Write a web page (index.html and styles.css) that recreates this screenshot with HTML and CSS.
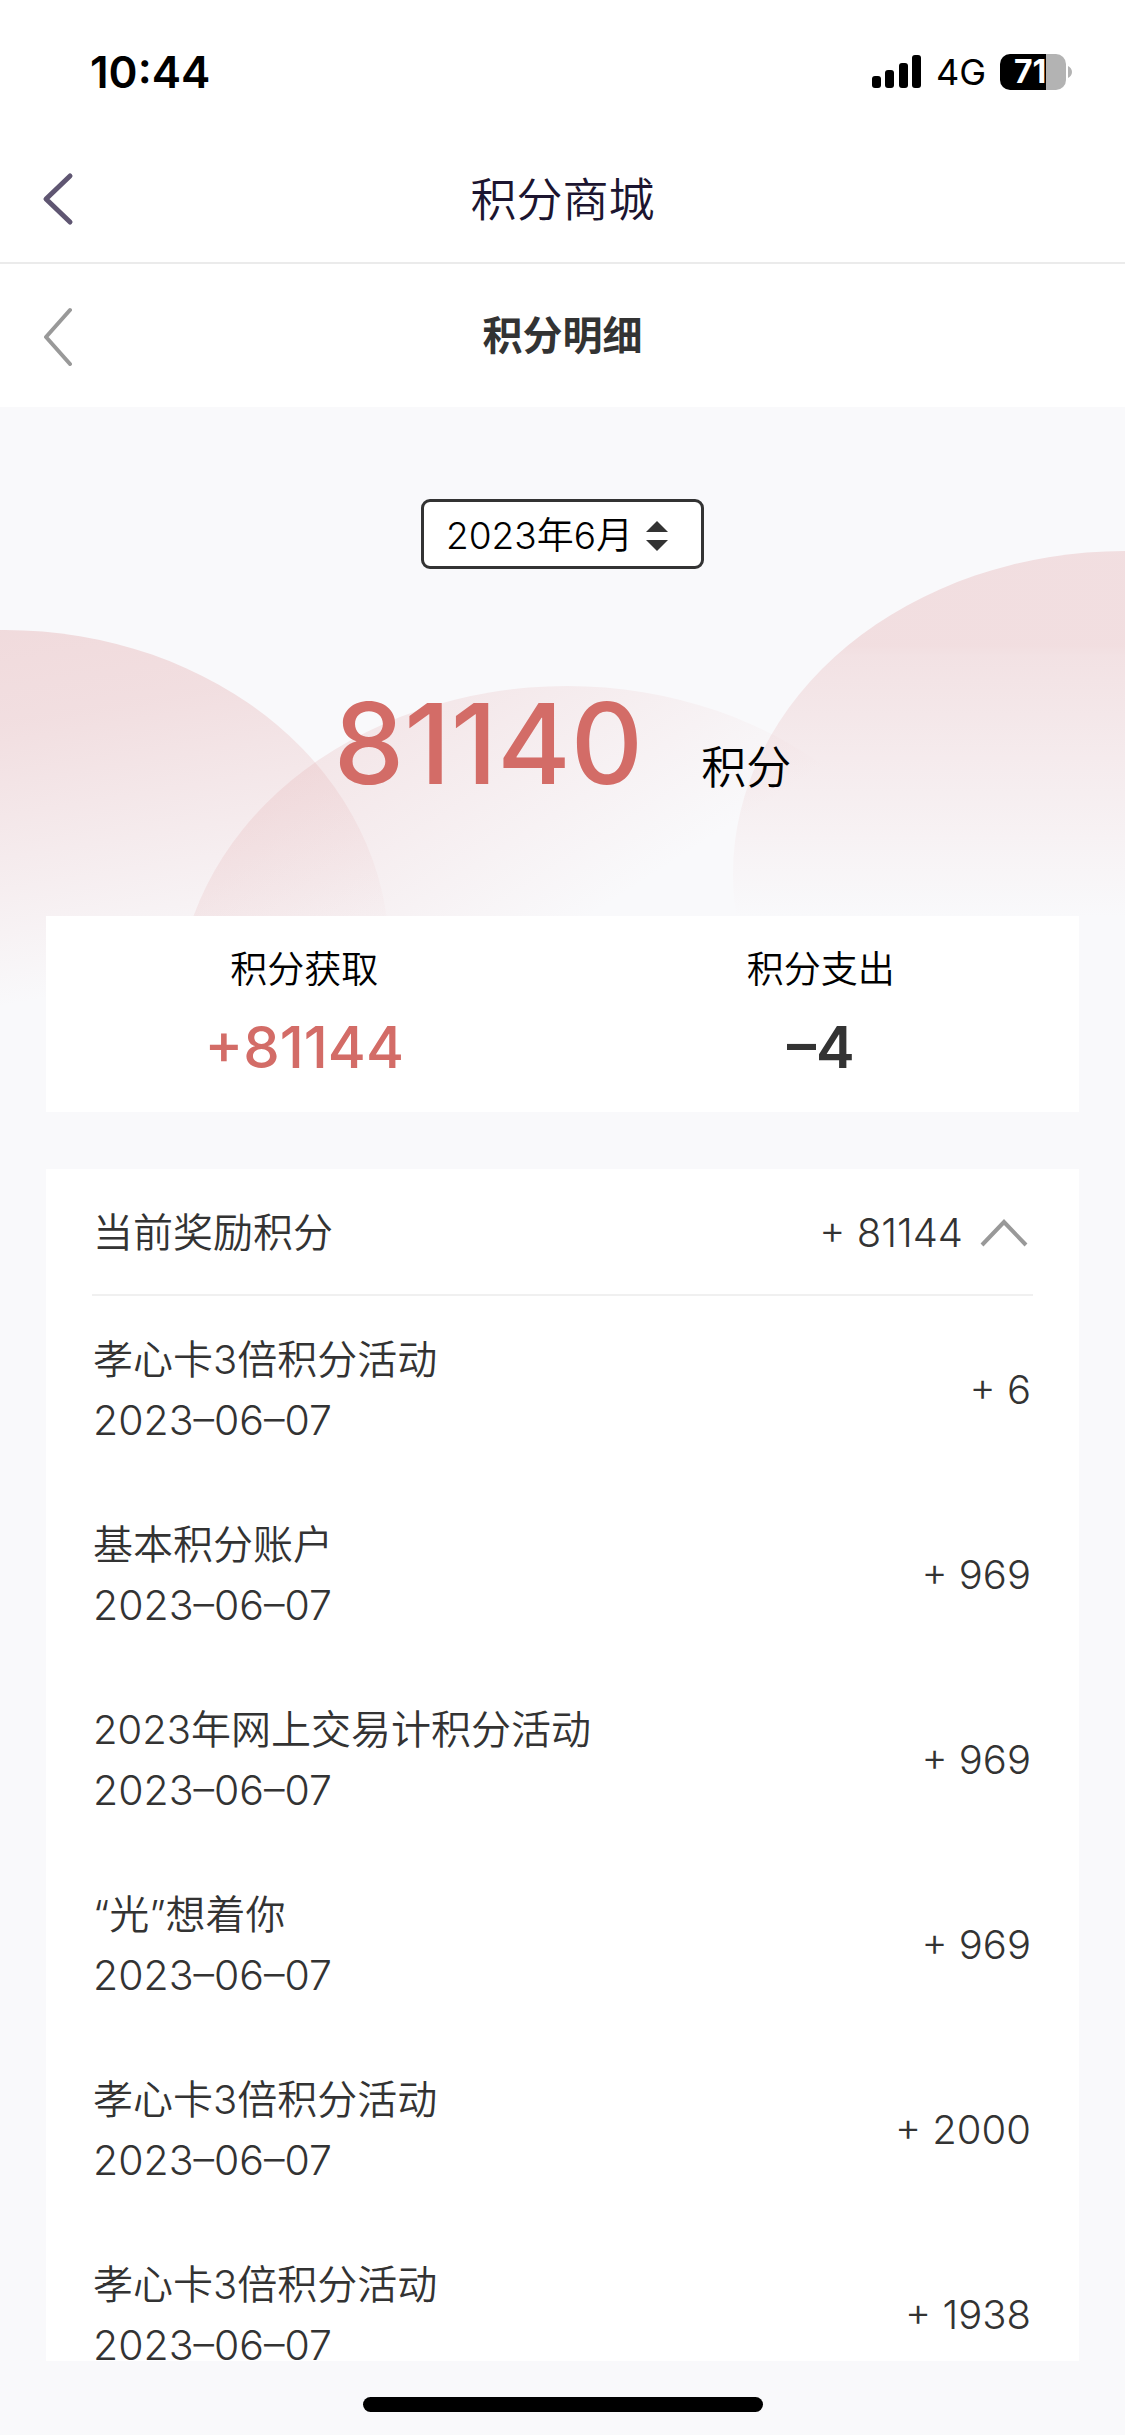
FILE: index.html
```html
<!DOCTYPE html>
<html lang="zh-CN">
<head>
  <meta charset="UTF-8">
  <meta name="viewport" content="width=device-width, initial-scale=1.0">
  <title>积分明细</title>
  <link rel="stylesheet" href="styles.css">
</head>
<body>
  <div class="status-bar">
    <span class="time">10:44</span>
    <div class="status-icons">
      <svg class="signal" width="50" height="34" viewBox="0 0 50 34">
        <rect x="0" y="21" width="9" height="12" rx="3"/>
        <rect x="13" y="15" width="9" height="18" rx="3"/>
        <rect x="27" y="8" width="9" height="25" rx="3"/>
        <rect x="40" y="0" width="9" height="33" rx="3"/>
      </svg>
      <span class="network">4G</span>
      <div class="battery"><span>71</span></div>
      <svg class="battery-tip" width="4" height="12" viewBox="0 0 4 12">
        <path d="M0 0C2 1 4 3 4 6S2 11 0 12Z"/>
      </svg>
    </div>
  </div>

  <header class="nav">
    <button class="back" aria-label="返回">
      <svg width="32" height="54" viewBox="0 0 32 54" fill="none" stroke="#5f5672" stroke-width="5" stroke-linecap="round" stroke-linejoin="round">
        <path d="M28 4L4 27L28 50"/>
      </svg>
    </button>
    <h1>积分商城</h1>
  </header>

  <header class="nav sub-nav">
    <button class="back" aria-label="返回上一页">
      <svg width="32" height="60" viewBox="0 0 32 60" fill="none" stroke="#999" stroke-width="4" stroke-linecap="round" stroke-linejoin="round">
        <path d="M28 4L4 31L28 58"/>
      </svg>
    </button>
    <h2>积分明细</h2>
  </header>

  <main class="main">
    <svg class="hero-bg" viewBox="0 0 1125 600" preserveAspectRatio="none">
      <defs>
        <linearGradient id="fadeLeft" gradientUnits="userSpaceOnUse" x1="0" y1="223" x2="60" y2="590">
          <stop offset="0" stop-color="#e0a0a2" stop-opacity=".34"/>
          <stop offset=".25" stop-color="#e0a0a2" stop-opacity=".3"/>
          <stop offset="1" stop-color="#e0a0a2" stop-opacity="0"/>
        </linearGradient>
        <linearGradient id="fadeMiddle" gradientUnits="userSpaceOnUse" x1="270" y1="320" x2="450" y2="600">
          <stop offset="0" stop-color="#e0a0a2" stop-opacity=".25"/>
          <stop offset="1" stop-color="#e0a0a2" stop-opacity="0"/>
        </linearGradient>
        <linearGradient id="fadeRight" gradientUnits="userSpaceOnUse" x1="0" y1="238" x2="0" y2="510">
          <stop offset="0" stop-color="#e0a0a2" stop-opacity=".3"/>
          <stop offset=".04" stop-color="#e0a0a2" stop-opacity=".26"/>
          <stop offset="1" stop-color="#e0a0a2" stop-opacity="0"/>
        </linearGradient>
      </defs>
      <ellipse cx="5" cy="546" rx="384" ry="323" fill="url(#fadeLeft)"/>
      <ellipse cx="567" cy="602" rx="390" ry="323" fill="url(#fadeMiddle)"/>
      <ellipse cx="1125" cy="467" rx="392" ry="323" fill="url(#fadeRight)"/>
    </svg>

    <section class="hero">
      <div class="month">
        <select aria-label="月份">
          <option>2023年6月</option>
          <option>2023年5月</option>
          <option>2023年4月</option>
        </select>
        <svg class="month-arrows" width="22" height="30" viewBox="0 0 22 30" fill="#333">
          <path d="M11 0L22 11H0Z"/>
          <path d="M0 19H22L11 30Z"/>
        </svg>
      </div>
      <p class="total"><strong>81140</strong><span>积分</span></p>
    </section>

    <section class="card summary">
      <div>
        <h3>积分获取</h3>
        <p class="income">+81144</p>
      </div>
      <div>
        <h3>积分支出</h3>
        <p>–4</p>
      </div>
    </section>

    <section class="card detail">
      <button class="detail-head" aria-expanded="true">
        <span>当前奖励积分</span>
        <span class="amount">+ 81144</span>
        <svg width="50" height="30" viewBox="0 0 50 30" fill="none" stroke="#999" stroke-width="4">
          <path d="M3 27L25 4L47 27"/>
        </svg>
      </button>
      <ul class="records">
        <li>
          <div>
            <p>孝心卡3倍积分活动</p>
            <time datetime="2023-06-07">2023–06–07</time>
          </div>
          <span class="amount">+ 6</span>
        </li>
        <li>
          <div>
            <p>基本积分账户</p>
            <time datetime="2023-06-07">2023–06–07</time>
          </div>
          <span class="amount">+ 969</span>
        </li>
        <li>
          <div>
            <p>2023年网上交易计积分活动</p>
            <time datetime="2023-06-07">2023–06–07</time>
          </div>
          <span class="amount">+ 969</span>
        </li>
        <li>
          <div>
            <p>“光”想着你</p>
            <time datetime="2023-06-07">2023–06–07</time>
          </div>
          <span class="amount">+ 969</span>
        </li>
        <li>
          <div>
            <p>孝心卡3倍积分活动</p>
            <time datetime="2023-06-07">2023–06–07</time>
          </div>
          <span class="amount">+ 2000</span>
        </li>
        <li>
          <div>
            <p>孝心卡3倍积分活动</p>
            <time datetime="2023-06-07">2023–06–07</time>
          </div>
          <span class="amount">+ 1938</span>
        </li>
      </ul>
    </section>
  </main>

  <footer class="home-bar"><span></span></footer>
</body>
</html>
```
FILE: styles.css
```css
* {
  box-sizing: border-box;
  margin: 0;
  padding: 0;
}

body {
  font-family: Inter, "Noto Sans CJK SC", sans-serif;
  font-size: 40px;
  font-weight: 350;
  line-height: 60px;
  color: #333;
  background-color: #f9f9fb;
  display: flex;
  flex-direction: column;
  height: 100vh;
}

button, select {
  font: inherit;
  color: inherit;
  background: none;
  border: none;
  cursor: pointer;
}

/* status bar */
.status-bar {
  display: flex;
  justify-content: space-between;
  align-items: center;
  height: 142px;
  padding: 2px 53px 0 90px;
  background-color: #fff;
  color: #000;
}

.time {
  font-size: 44px;
  font-weight: 600;
}

.status-icons {
  display: flex;
  align-items: center;
}

.network {
  font-size: 36px;
  font-weight: 400;
  margin: 0 14px;
}

.battery {
  width: 66px;
  height: 36px;
  border-radius: 10px;
  background: linear-gradient(to right, #000 70%, #b3b3b3 70%);
  color: #fff;
  font-size: 32px;
  font-weight: 700;
  line-height: 36px;
  padding-left: 14px;
}

.battery-tip {
  margin-left: 2px;
  fill: #b3b3b3;
}

/* nav bars */
.nav {
  display: grid;
  grid-template-columns: 1fr auto 1fr;
  align-items: center;
  height: 122px;
  padding: 0 42px 6px;
  background-color: #fff;
  border-bottom: 2px solid #ebebeb;
}

.nav h1 {
  font-size: 46px;
  font-weight: 350;
  color: #1c1530;
}

.back {
  display: flex;
  justify-self: start;
}

.sub-nav {
  height: 143px;
  padding-bottom: 0;
  border-bottom: none;
}

.sub-nav h2 {
  font-size: 40px;
  font-weight: 700;
}

/* content */
.main {
  position: relative;
  flex: 1;
  min-height: 0;
  display: flex;
  flex-direction: column;
  padding: 0 46px;
}

.hero-bg {
  position: absolute;
  top: 0;
  left: 0;
  width: 100%;
  height: 600px;
}

.hero {
  position: relative;
  display: flex;
  flex-direction: column;
  align-items: center;
  gap: 104px;
  padding: 92px 0 78px;
}

.month {
  position: relative;
}

.month select {
  appearance: none;
  display: block;
  width: 283px;
  height: 70px;
  padding: 4px 20px 0 22px;
  font-size: 37px;
  color: #000;
  background-color: #fff;
  border: 3px solid #333;
  border-radius: 9px;
}

.month-arrows {
  position: absolute;
  top: 22px;
  right: 36px;
  pointer-events: none;
}

.total {
  display: flex;
  align-items: baseline;
  gap: 58px;
  line-height: 140px;
}

.total strong {
  font-size: 112px;
  font-weight: 500;
  color: #d36c67;
}

.total span {
  font-size: 45px;
  color: #000;
}

.card {
  position: relative;
  background-color: #fff;
}

.summary {
  display: grid;
  grid-template-columns: 1fr 1fr;
  padding: 24px 0 26px;
  margin-bottom: 57px;
  text-align: center;
}

.summary h3 {
  font-size: 37px;
  font-weight: 350;
  color: #000;
}

.summary p {
  font-size: 58px;
  font-weight: 600;
  line-height: 78px;
  padding-top: 8px;
}

.summary .income {
  font-weight: 500;
  color: #d36c67;
}

.detail {
  flex: 1;
  min-height: 0;
  overflow: hidden;
  padding: 0 46px;
}

.detail-head {
  display: flex;
  align-items: center;
  width: 100%;
  height: 127px;
  padding: 2px 4px 0 1px;
  border-bottom: 2px solid #f0f0f0;
}

.amount {
  margin-left: auto;
}

.detail-head svg {
  margin-left: 16px;
}

.records {
  list-style: none;
}

.records li {
  display: flex;
  align-items: center;
  height: 185px;
  padding: 3px 2px 0 1px;
}

.records time {
  display: block;
  font-size: 41px;
}

.home-bar {
  display: flex;
  justify-content: center;
  align-items: center;
  height: 74px;
  padding-top: 13px;
}

.home-bar span {
  width: 400px;
  height: 15px;
  border-radius: 8px;
  background-color: #000;
}
```
